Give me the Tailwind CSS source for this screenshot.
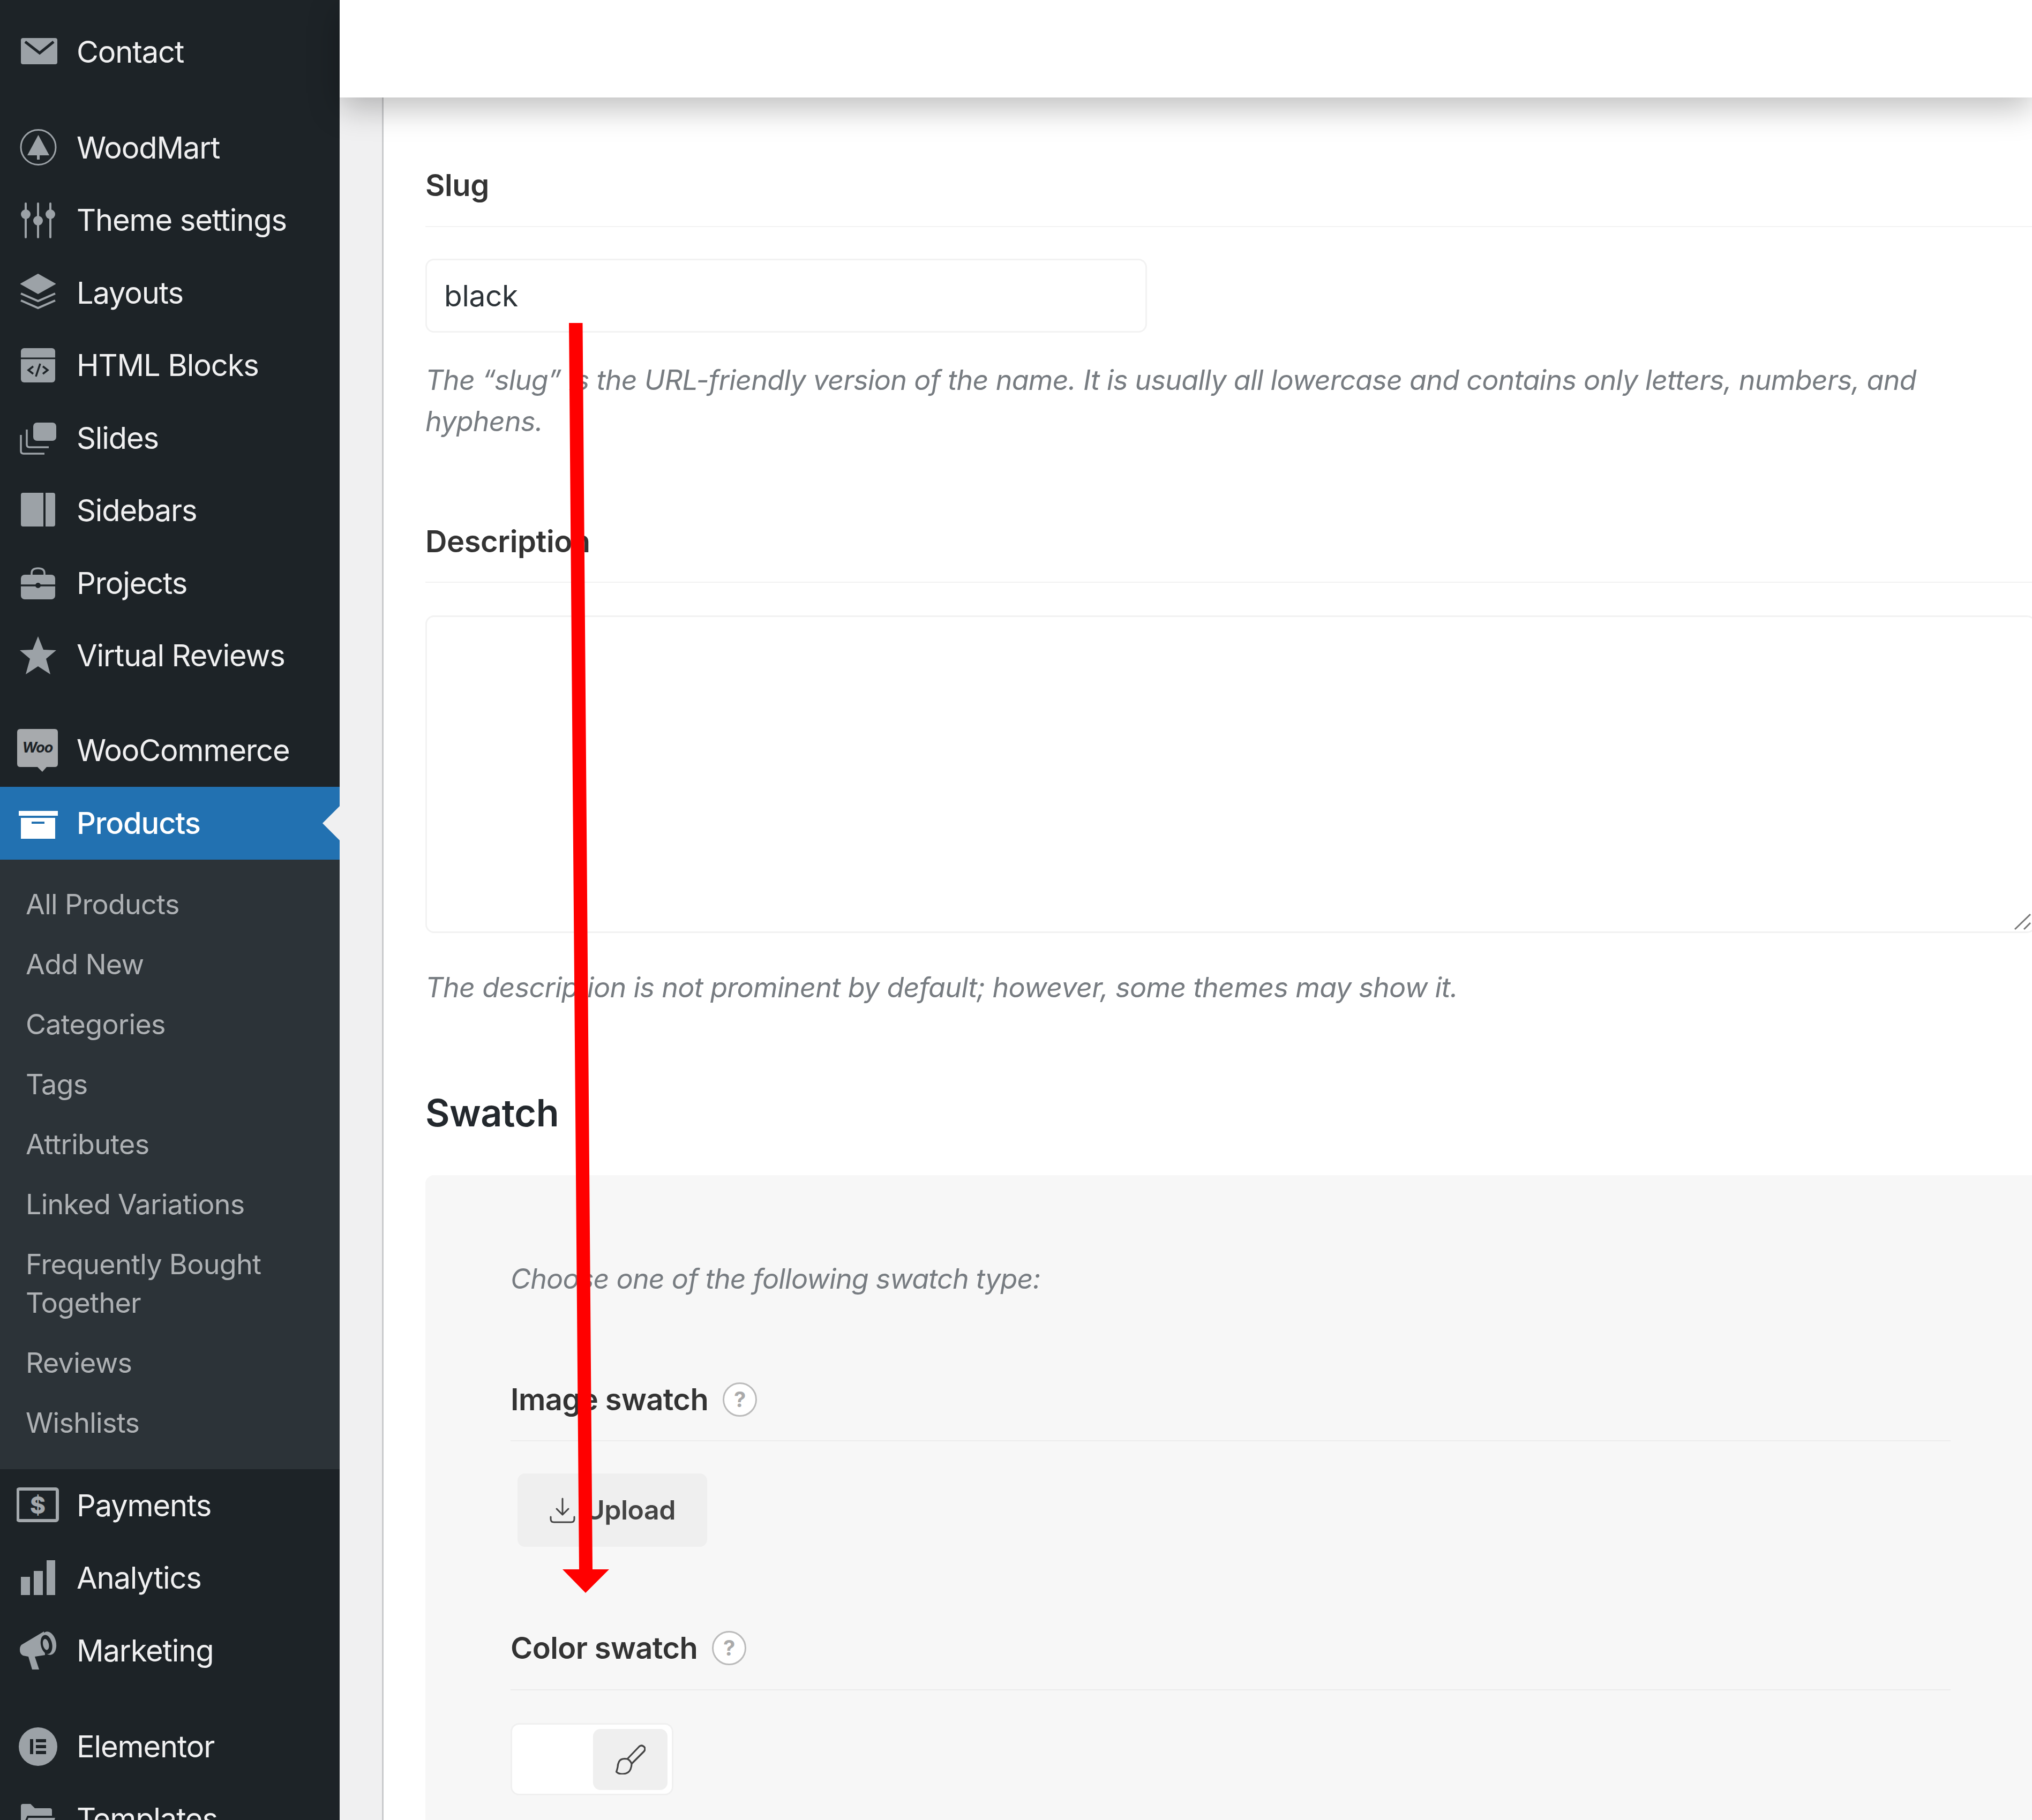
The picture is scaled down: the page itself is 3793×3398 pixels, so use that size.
<!DOCTYPE html>
<html lang="en">

<head>
    <meta charset="UTF-8">
    <meta name="viewport" content="width=device-width, initial-scale=1.0">
    <title>Edit attribute</title>
    <script src="https://cdn.jsdelivr.net/npm/@tailwindcss/browser@4"></script>
</head>

<body class="bg-[#f0f0f1] font-['Inter',sans-serif]">
    <div class="relative flex w-[3793px] h-[3398px] overflow-hidden">

        <!-- admin menu -->
        <aside class="w-[634px] shrink-0 bg-[#1d2327] pt-[29px] text-[#f0f0f1] text-[56px] tracking-[-1.1px] leading-[72px]">
            <ul>
                <li class="flex items-center h-[135.5px] pl-[31px] gap-[32px]">
                    <svg class="w-[80px] h-[80px] shrink-0" viewBox="0 0 80 80" fill="#9ca2a7"><rect x="8" y="14" width="68" height="49" rx="4"/><path d="M16 21 43 42 69 21" fill="none" stroke="#1d2327" stroke-width="5"/></svg>
                    Contact
                </li>
            </ul>
            <ul class="mt-[43.5px]">
                <li class="flex items-center h-[135.5px] pl-[31px] gap-[32px]">
                    <svg class="w-[80px] h-[80px] shrink-0" viewBox="0 0 80 80" fill="#9ca2a7"><circle cx="40.5" cy="39" r="32.5" fill="none" stroke="#9ca2a7" stroke-width="3"/><path d="M40.5 16 61 54H43v8h-5v-8H20z"/></svg>
                    WoodMart
                </li>
                <li class="flex items-center h-[135.5px] pl-[31px] gap-[32px]">
                    <svg class="w-[80px] h-[80px] shrink-0" viewBox="0 0 80 80" fill="#9ca2a7"><path d="M17 9v63M40 9v63M63 9v63" stroke="#9ca2a7" stroke-width="4" stroke-linecap="round"/><circle cx="17" cy="29" r="9"/><circle cx="40" cy="41" r="9"/><circle cx="63" cy="29" r="9"/></svg>
                    Theme settings
                </li>
                <li class="flex items-center h-[135.5px] pl-[31px] gap-[32px]">
                    <svg class="w-[80px] h-[80px] shrink-0" viewBox="0 0 80 80" fill="#9ca2a7"><path d="M40 5 72 23 40 41 8 23z" stroke="#9ca2a7" stroke-width="2" stroke-linejoin="round"/><path d="M8 41 40 55 72 41M8 54 40 68 72 54" fill="none" stroke="#9ca2a7" stroke-width="4"/></svg>
                    Layouts
                </li>
                <li class="flex items-center h-[135.5px] pl-[31px] gap-[32px]">
                    <svg class="w-[80px] h-[80px] shrink-0" viewBox="0 0 80 80" fill="#9ca2a7"><rect x="8" y="8" width="64" height="64" rx="6"/><path d="M8 27h64" stroke="#1d2327" stroke-width="3"/><path d="M31 42 22 49 31 56M49 42 58 49 49 56M44 37 36 61" fill="none" stroke="#1d2327" stroke-width="3.5"/></svg>
                    HTML Blocks
                </li>
                <li class="flex items-center h-[135.5px] pl-[31px] gap-[32px]">
                    <svg class="w-[80px] h-[80px] shrink-0" viewBox="0 0 80 80" fill="#9ca2a7"><rect x="31" y="11" width="43" height="34" rx="7"/><path d="M19 24v28q0 5 5 5h36M8 34v30q0 5 5 5h39" fill="none" stroke="#9ca2a7" stroke-width="3.5"/></svg>
                    Slides
                </li>
                <li class="flex items-center h-[135.5px] pl-[31px] gap-[32px]">
                    <svg class="w-[80px] h-[80px] shrink-0" viewBox="0 0 80 80" fill="#9ca2a7"><path d="M12 7h38v63H12q-4 0-4-4V11q0-4 4-4zM54 7h14q4 0 4 4v55q0 4-4 4H54z"/></svg>
                    Sidebars
                </li>
                <li class="flex items-center h-[135.5px] pl-[31px] gap-[32px]">
                    <svg class="w-[80px] h-[80px] shrink-0" viewBox="0 0 80 80" fill="#9ca2a7"><path d="M28 25v-4q0-9 12-9t12 9v4" fill="none" stroke="#9ca2a7" stroke-width="3.5"/><rect x="8" y="24" width="64" height="46" rx="7"/><path d="M8 44h64" stroke="#1d2327" stroke-width="3.5"/><circle cx="40" cy="44" r="5" fill="#1d2327"/></svg>
                    Projects
                </li>
                <li class="flex items-center h-[135.5px] pl-[31px] gap-[32px]">
                    <svg class="w-[80px] h-[80px] shrink-0" viewBox="0 0 80 80" fill="#9ca2a7"><path d="M40 4 50 29 74 30 55 46 63 75 40 60 17 75 25 46 6 30 30 29z"/></svg>
                    Virtual Reviews
                </li>
            </ul>
            <ul class="mt-[41.5px]">
                <li class="flex items-center h-[135.5px] pl-[31px] gap-[32px]">
                    <svg class="w-[80px] h-[80px] shrink-0" viewBox="0 0 80 80" fill="#a7aaad"><path d="M7 0h64q6 0 6 6v59q0 6-6 6H56l-8 9-9-9H7q-6 0-6-6V6q0-6 6-6z"/><text x="39" y="44" text-anchor="middle" font-size="27" font-weight="700" font-style="italic" letter-spacing="-1" fill="#1d2327" font-family="Inter, sans-serif">Woo</text></svg>
                    WooCommerce
                </li>
                <li>
                    <div class="relative flex items-center h-[136px] pl-[31px] gap-[32px] bg-[#2271b1] text-white font-medium">
                        <svg class="w-[80px] h-[80px] shrink-0" viewBox="0 0 80 80" fill="#fff"><rect x="4" y="17" width="73" height="9"/><path d="M8 30h64v39H8zM28 37v4h24v-4z" fill-rule="evenodd"/></svg>
                        Products
                        <span class="absolute right-0 top-[36px] border-y-[32px] border-r-[32px] border-y-transparent border-r-[#f0f0f1]"></span>
                    </div>
                    <ul class="bg-[#2c3338] pt-[28px] pb-[30px] text-[#aeb1b4] text-[52px] tracking-[-0.7px]">
                        <li class="pl-[48px] py-[20px]">All Products</li>
                        <li class="pl-[48px] py-[20px]">Add New</li>
                        <li class="pl-[48px] py-[20px]">Categories</li>
                        <li class="pl-[48px] py-[20px]">Tags</li>
                        <li class="pl-[48px] py-[20px]">Attributes</li>
                        <li class="pl-[48px] py-[20px]">Linked Variations</li>
                        <li class="pl-[48px] py-[20px]">Frequently Bought<br>Together</li>
                        <li class="pl-[48px] py-[20px]">Reviews</li>
                        <li class="pl-[48px] py-[20px]">Wishlists</li>
                    </ul>
                </li>
                <li class="flex items-center h-[135.5px] pl-[31px] gap-[32px]">
                    <svg class="w-[80px] h-[80px] shrink-0" viewBox="0 0 80 80" fill="#a3a8ac"><rect x="2" y="9" width="74" height="59" rx="3" fill="none" stroke="#a3a8ac" stroke-width="6"/><text x="39" y="55" text-anchor="middle" font-size="44" font-weight="800" font-family="Inter, sans-serif">$</text></svg>
                    Payments
                </li>
                <li class="flex items-center h-[135.5px] pl-[31px] gap-[32px]">
                    <svg class="w-[80px] h-[80px] shrink-0" viewBox="0 0 80 80" fill="#9ca2a7"><path d="M8 38h17v34H8zM32 27h17v45H32zM56 7h16v65H56z"/></svg>
                    Analytics
                </li>
                <li class="flex items-center h-[135.5px] pl-[31px] gap-[32px]">
                    <svg class="w-[80px] h-[80px] shrink-0" viewBox="0 0 80 80" fill="#9ca2a7"><path d="M51 4 9 29q-3 3-3 9 0 8 6 11l10 2 7 24h13l-8-24 19-3z"/><ellipse cx="59.700" cy="26" rx="14" ry="22" transform="rotate(-12 59.700 26)"/><ellipse cx="55.700" cy="28.300" rx="10.500" ry="18" transform="rotate(-12 55.700 28.300)" fill="#1d2327"/><ellipse cx="54.700" cy="28.300" rx="5.500" ry="10.500" transform="rotate(-12 54.700 28.300)"/></svg>
                    Marketing
                </li>
            </ul>
            <ul class="mt-[43.5px]">
                <li class="flex items-center h-[135.5px] pl-[31px] gap-[32px]">
                    <svg class="w-[80px] h-[80px] shrink-0" viewBox="0 0 80 80" fill="#9ca2a7"><circle cx="40" cy="40" r="36"/><path d="M25 26h6v28h-6zM36 26h19v6H36zM36 37h19v6H36zM36 48h19v6H36z" fill="#1d2327"/></svg>
                    Elementor
                </li>
                <li class="flex items-center h-[135.5px] pl-[31px] gap-[32px]">
                    <svg class="w-[80px] h-[80px] shrink-0" viewBox="0 0 80 80" fill="#9ca2a7"><path d="M8 16q0-4 4-4h14l8 8h28q4 0 4 4v10H20L8 60z"/><path d="M22 38h50L60 72H8z"/></svg>
                    Templates
                </li>
            </ul>
        </aside>

        <main class="flex-1 min-w-0 flex flex-col">
            <!-- top bar -->
            <div class="relative z-10 h-[182px] shrink-0 bg-white shadow-[0_20px_60px_rgba(0,0,0,0.26)]"></div>

            <div class="flex-1 pl-[79px]">
                <div class="h-full bg-white border-l-[3px] border-[#c9cacc] pl-[78px] pt-[122px] text-[#2c3338]">

                    <label class="block h-[120px] pb-[34px] leading-[84px] text-[56px] tracking-[-0.4px] font-semibold border-b-[2px] border-[#f2f2f2] text-[#333]">Slug</label>
                    <input type="text" value="black" class="block mt-[59px] w-[1347px] h-[138px] px-[32px] text-[55px] tracking-[-0.3px] text-[#2c3338] border-[3px] border-[#f2f2f2] rounded-[16px]">
                    <p class="mt-[50px] w-[2900px] text-[52px] tracking-[-0.74px] leading-[77px] italic text-[#777c81]">The “slug” is the URL-friendly version of the name. It is usually all lowercase and contains only letters, numbers, and hyphens.</p>

                    <label class="block mt-[144px] h-[119px] pb-[33px] leading-[84px] text-[56px] tracking-[-0.4px] font-semibold border-b-[2px] border-[#f2f2f2] text-[#333]">Description</label>
                    <div class="relative mt-[61px] w-[3006px] h-[593px]">
                        <textarea class="block w-full h-full resize-none border-[3px] border-[#f2f2f2] rounded-[16px]"></textarea>
                        <svg class="absolute right-0 bottom-0 w-[40px] h-[40px]" viewBox="0 0 40 40" fill="none" stroke="#777" stroke-width="3"><path d="M1 33 30 5M18 33 30 21"/></svg>
                    </div>
                    <p class="mt-[63px] text-[52px] tracking-[-0.66px] leading-[77px] italic text-[#777c81]">The description is not prominent by default; however, some themes may show it.</p>

                    <h2 class="mt-[151px] text-[70px] tracking-[-0.5px] leading-[90px] font-semibold text-[#23282d]">Swatch</h2>

                    <!-- swatch panel -->
                    <div class="mt-[71px] h-[1300px] bg-[#f7f7f7] rounded-l-[16px] pl-[159px] pt-[155px]">
                        <p class="text-[52px] tracking-[-0.8px] leading-[77px] italic text-[#777c81]">Choose one of the following swatch type:</p>

                        <div class="mt-[145px] w-[2688px] h-[120px] pb-[34px] flex items-center gap-[27px] border-b-[2px] border-[#ececec]">
                            <span class="text-[56px] tracking-[-0.6px] font-semibold text-[#333]">Image swatch</span>
                            <span class="flex items-center justify-center w-[64px] h-[64px] rounded-full bg-white border-[3px] border-[#bbb] text-[40px] font-bold text-[#aaa]">?</span>
                        </div>
                        <button class="flex items-center gap-[18px] mt-[60px] ml-[13px] w-[354px] h-[137px] pl-[60px] rounded-[14px] bg-[#efefef] text-[50px] tracking-[-0.5px] font-semibold text-[#444]">
                            <svg class="w-[48px] h-[48px]" viewBox="0 0 48 48" fill="none" stroke="#444" stroke-width="3" stroke-linecap="round" stroke-linejoin="round"><path d="M24 2v30M13 21l11 11 11-11M2 36v4q0 6 6 6h32q6 0 6-6v-4"/></svg>
                            Upload
                        </button>

                        <div class="mt-[147px] w-[2688px] h-[121px] pb-[35px] flex items-center gap-[27px] border-b-[2px] border-[#ececec]">
                            <span class="text-[56px] tracking-[-0.6px] font-semibold text-[#333]">Color swatch</span>
                            <span class="flex items-center justify-center w-[64px] h-[64px] rounded-full bg-white border-[3px] border-[#bbb] text-[40px] font-bold text-[#aaa]">?</span>
                        </div>
                        <div class="flex justify-end items-center mt-[61px] w-[304px] h-[135px] pr-[8px] bg-white border-[3px] border-[#f0f0f0] rounded-[16px]">
                            <span class="flex items-center justify-center w-[139px] h-[114px] rounded-[14px] bg-[#efefef]">
                                <svg class="w-[56px] h-[56px]" viewBox="0 0 56 56" fill="none" stroke="#444" stroke-width="3.2" stroke-linejoin="round"><path d="M22 27 44 4Q48 0 53 4 57 8 53 13L30 36"/><path d="M22 27Q10 25 6.500 32 4 37 4 42 3 47 1.500 51 7 56 14 55 25 54 28 46 30 41 30 36 27 29 22 27z"/></svg>
                            </span>
                        </div>
                    </div>
                </div>
            </div>
        </main>

        <!-- red annotation arrow drawn over the screenshot -->
        <svg class="absolute left-0 top-0 w-[3793px] h-[3398px] pointer-events-none" viewBox="0 0 3793 3398" fill="#ff0000"><path d="M1062 603h25.500L1106 2930h31l-44 44-43-44h31z"/></svg>
    </div>
</body>

</html>
